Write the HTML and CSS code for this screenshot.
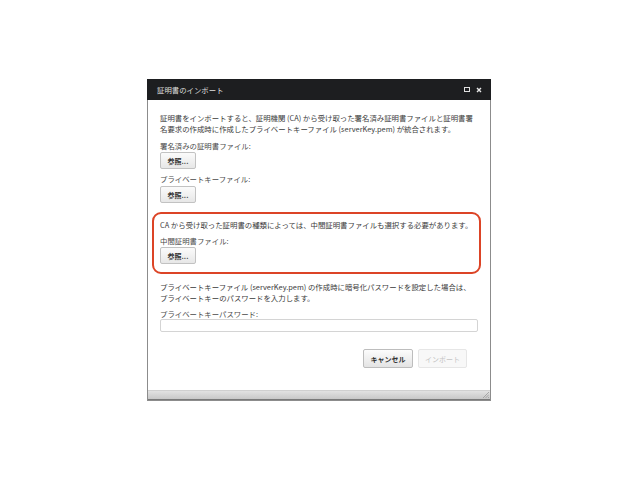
FILE: index.html
```html
<!DOCTYPE html>
<html lang="ja">
<head>
<meta charset="utf-8">
<title>証明書のインポート</title>
<link rel="stylesheet" href="styles.css">
</head>
<body>
<div class="dialog">
  <div class="titlebar">
    <span class="title">証明書のインポート</span>
    <span class="tools">
      <span class="max"></span>
      <svg class="close" width="6" height="6" viewBox="0 0 6 6"><path d="M1 1L5 5M5 1L1 5" stroke="#e8e8e8" stroke-width="1.4"/></svg>
    </span>
  </div>
  <div class="content">
    <p class="text">証明書をインポートすると、証明機関 (CA) から受け取った署名済み証明書ファイルと証明書署<br>名要求の作成時に作成したプライベートキーファイル (serverKey.pem) が統合されます。</p>
    <div class="label first">署名済みの証明書ファイル:</div>
    <button class="browse">参照...</button>
    <div class="label second">プライベートキーファイル:</div>
    <button class="browse b2">参照...</button>
    <div class="highlight">
      <p class="text">CA から受け取った証明書の種類によっては、中間証明書ファイルも選択する必要があります。</p>
      <div class="label inbox">中間証明書ファイル:</div>
      <button class="browse">参照...</button>
    </div>
    <p class="text after">プライベートキーファイル (serverKey.pem) の作成時に暗号化パスワードを設定した場合は、<br>プライベートキーのパスワードを入力します。</p>
    <div class="label pw">プライベートキーパスワード:</div>
    <input class="field" type="password">
    <div class="actions">
      <button class="btn cancel">キャンセル</button>
      <button class="btn disabled">インポート</button>
    </div>
  </div>
  <div class="footer">
    <svg class="grip" width="7" height="7" viewBox="0 0 7 7"><path d="M1 7L7 1M3.5 7L7 3.5M6 7L7 6" stroke="#999" stroke-width="0.8"/></svg>
  </div>
</div>
</body>
</html>
```
FILE: styles.css
```css
* { box-sizing: border-box; }
html, body { margin: 0; padding: 0; background: #ffffff; }
body {
  font-family: "Noto Sans CJK JP", "Liberation Sans", sans-serif;
  font-size: 7.4px;
  line-height: 11px;
  color: #3a3a3a;
  padding-top: 79px;
}
.dialog {
  margin-left: 147px;
  width: 344px;
  height: 322px;
  border: 1px solid #8c8c8c;
  border-top: none;
  background: #fff;
  display: flex;
  flex-direction: column;
}
.titlebar {
  height: 21px;
  background: #1d1e20;
  margin: 0 -1px;
  display: flex;
  align-items: center;
  justify-content: space-between;
  padding: 0 9px 0 10px;
}
.title { color: #dedede; font-size: 7.4px; }
.tools { display: flex; align-items: center; gap: 6px; }
.max { width: 6px; height: 5px; border: 1px solid #e0e0e0; display: block; }
.close { display: block; }
.content {
  flex: 1;
  padding: 12px 12px 0 12px;
  display: flex;
  flex-direction: column;
  align-items: flex-start;
}
.text { margin: 0; width: 100%; white-space: nowrap; }
.label { color: #4a4a4a; }
.label.first { margin-top: 6px; }
.label.second { margin-top: 4px; }
.label.inbox { margin-top: 5px; }
.label.pw { margin-top: 5px; }
.browse {
  margin-top: 1px;
  width: 36px;
  height: 17px;
  padding: 0;
  font-family: inherit;
  font-size: 7px;
  font-weight: bold;
  color: #333;
  background: linear-gradient(#fbfbfb, #e7e7e7);
  border: 1px solid #c2c2c2;
  border-radius: 2px;
}
.browse.b2 { margin-top: 2px; }
.highlight {
  margin: 9px -3px 0 -8px;
  align-self: stretch;
  border: 2px solid #dc4426;
  border-radius: 9px;
  padding: 5px 3px 8px 6px;
  display: flex;
  flex-direction: column;
  align-items: flex-start;
}
.text.after { margin-top: 7px; }
.field {
  align-self: stretch;
  height: 13px;
  margin: 0;
  border: 1px solid #d4d4d4;
  border-radius: 2px;
  background: #fff;
}
.actions {
  align-self: stretch;
  margin-top: 17px;
  padding-right: 11px;
  display: flex;
  justify-content: flex-end;
  gap: 5px;
}
.btn {
  height: 19px;
  padding: 0;
  font-family: inherit;
  font-size: 7px;
  border-radius: 2px;
}
.cancel {
  width: 50px;
  font-weight: bold;
  color: #333;
  background: linear-gradient(#fcfcfc, #e4e4e4);
  border: 1px solid #bdbdbd;
}
.disabled {
  width: 49px;
  color: #c4c4c4;
  background: #f8f8f8;
  border: 1px solid #e6e6e6;
}
.footer {
  height: 10px;
  background: linear-gradient(#e2e2e2, #c8c8c8);
  border-top: 1px solid #d0d0d0;
  border-bottom: 1px solid #7a7a7a;
  display: flex;
  justify-content: flex-end;
  align-items: flex-end;
  padding: 0 1px 1px 0;
}
.grip { display: block; }
```
